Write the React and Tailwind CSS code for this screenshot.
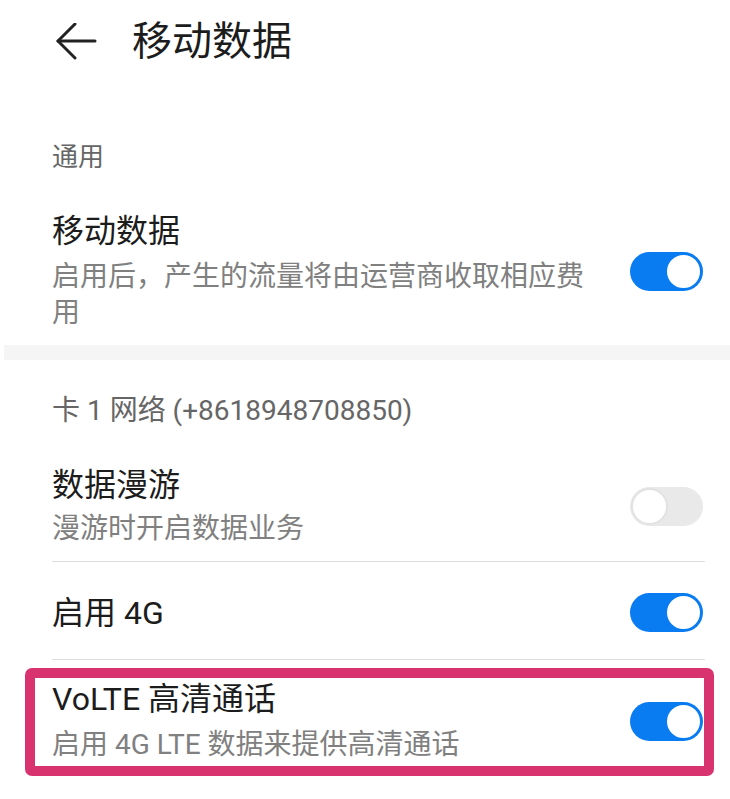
import React from 'react';

const FONT = { fontFamily: 'Roboto, "Noto Sans CJK SC", sans-serif' };

// Simple EMUI style toggle
const Toggle = ({ on }) => (
  <div
    className={`relative w-[73px] h-[39px] rounded-full shrink-0 ${on ? 'bg-[#0a7cf2]' : 'bg-[#e9e9e9]'}`}
  >
    <div
      className={`absolute top-[1px] w-[37px] h-[37px] rounded-full bg-white border-2 ${on ? 'right-[1px] border-[#0a7cf2]' : 'left-[1px] border-[#e2e2e2]'}`}
    />
  </div>
);

const SectionLabel = ({ children, className }) => (
  <div className={`pl-[52px] leading-[34px] text-[#666666] ${className}`}>{children}</div>
);

const Divider = () => <div className="ml-[52px] mr-[25px] h-px bg-[#dedede]" />;

const App = () => {
  return (
    <div className="w-[730px] min-h-[799px] bg-white" style={FONT}>
      {/* Header */}
      <div className="h-[84px] flex items-center pl-[55px]">
        <svg width="42" height="38" viewBox="0 0 42 38" fill="none" stroke="#222" strokeWidth="3" strokeLinecap="round" strokeLinejoin="round">
          <path d="M3 18 H40" />
          <path d="M20 1 L3 18 L20 35" />
        </svg>
        <div className="ml-[35px] text-[40px] leading-[50px] text-[#1c1c1c]">移动数据</div>
      </div>

      {/* General */}
      <SectionLabel className="pt-[56px] text-[26px]">通用</SectionLabel>

      <div className="flex items-center pl-[52px] pr-[27px] pt-[38px] pb-[14px]">
        <div className="flex-1">
          <div className="text-[32px] leading-[38px] text-[#1c1c1c]">移动数据</div>
          <div className="mt-[9px] max-w-[545px] text-[28px] leading-[36px] text-[#808080]">
            启用后，产生的流量将由运营商收取相应费用
          </div>
        </div>
        <Toggle on />
      </div>

      <div className="ml-[4px] h-[15px] bg-[#f5f5f5]" />

      {/* SIM 1 */}
      <SectionLabel className="pt-[34px] text-[28px]">卡 1 网络 (+8618948708850)</SectionLabel>

      <div className="flex items-center pl-[52px] pr-[27px] pt-[38px] pb-[14px]">
        <div className="flex-1">
          <div className="text-[32px] leading-[38px] text-[#1c1c1c]">数据漫游</div>
          <div className="mt-[7px] text-[28px] leading-[36px] text-[#808080]">漫游时开启数据业务</div>
        </div>
        <Toggle on={false} />
      </div>

      <Divider />

      <div className="flex items-center pl-[52px] pr-[27px] pt-[31px] pb-[27px]">
        <div className="flex-1 text-[32px] leading-[38px] text-[#1c1c1c]">启用 4G</div>
        <Toggle on />
      </div>

      <Divider />

      {/* Highlighted VoLTE row */}
      <div className="mt-[8px] ml-[25px] w-[689px] border-[10px] border-[#d8326f] rounded-[7px] flex items-center pl-[17px] pr-px pt-[2px] pb-[3px]">
        <div className="flex-1">
          <div className="text-[32px] leading-[38px] text-[#1c1c1c]">VoLTE 高清通话</div>
          <div className="mt-[9px] text-[28px] leading-[36px] text-[#808080]">启用 4G LTE 数据来提供高清通话</div>
        </div>
        <Toggle on />
      </div>
    </div>
  );
};

export default App;
